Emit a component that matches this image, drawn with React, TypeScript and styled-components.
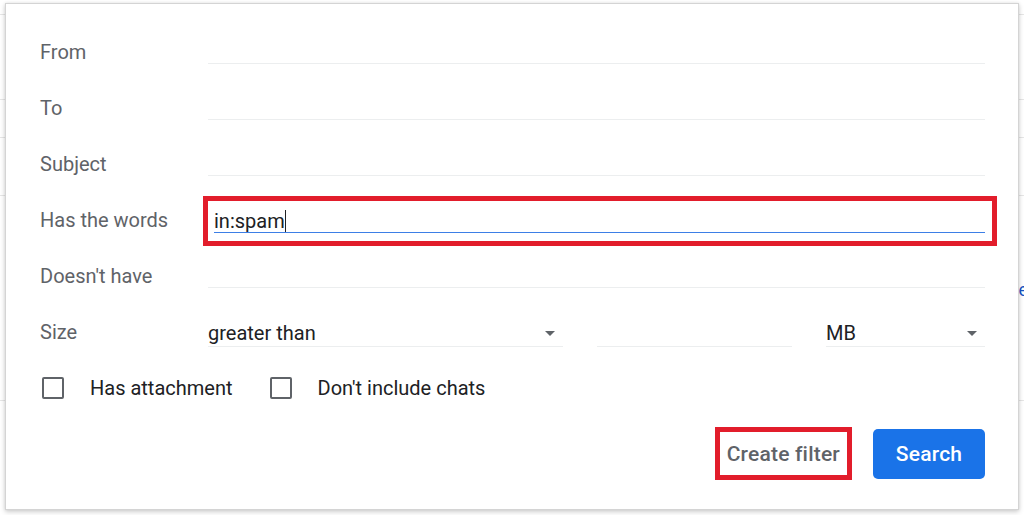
import styled, { createGlobalStyle } from 'styled-components';

const GlobalStyle = createGlobalStyle`
  html, body {
    margin: 0;
    padding: 0;
    background: #fff;
    overflow: hidden;
  }
  body {
    font-family: Roboto, "Liberation Sans", Arial, sans-serif;
  }
`;

const Page = styled.div`
  position: relative;
  width: 1024px;
  height: 515px;
  background: #fff;
  overflow: hidden;
`;

const Backdrop = styled.div`
  display: flex;
  flex-direction: column;
  height: 100%;
`;

const BackdropLine = styled.div<{ $top: number }>`
  margin-top: ${(p) => p.$top}px;
  height: 1px;
  background: #e6e6e6;
`;

const BackdropLink = styled.div`
  display: flex;
  justify-content: flex-end;
  margin-top: 84px;
  font-size: 18px;
  color: #1a56c4;
  line-height: 20px;
  margin-right: -4px;
`;

const Dialog = styled.div`
  position: absolute;
  left: 5px;
  top: 3px;
  width: 1014px;
  height: 507px;
  background: #fff;
  border: 1px solid #d4d4d4;
  box-shadow: 0 2px 5px rgba(0, 0, 0, 0.18), 0 0 3px rgba(0, 0, 0, 0.08);
  padding: 20px 33px 0 34px;
  box-sizing: border-box;
  display: flex;
  flex-direction: column;
`;

const Row = styled.div`
  display: grid;
  grid-template-columns: 168px 1fr;
  align-items: center;
  height: 56px;
`;

const Label = styled.div`
  font-size: 20px;
  color: #5f6368;
`;

const Field = styled.div<{ $focused?: boolean }>`
  height: 24px;
  box-sizing: border-box;
  border-bottom: 1px solid ${(p) => (p.$focused ? '#3d7fe6' : '#eceeef')};
  font-size: 20px;
  color: #202124;
  display: flex;
  align-items: center;
  margin-left: ${(p) => (p.$focused ? '6px' : '0')};
`;

const Highlight = styled.div`
  border: 5px solid #e21d2b;
`;

const WordsBox = styled(Highlight)`
  margin: 2px -12px 0 -5px;
  height: 50px;
  box-sizing: border-box;
  display: flex;
  align-items: center;
`;

const WordsField = styled(Field)`
  flex: 1;
  margin-right: 7px;
`;

const Caret = styled.span`
  display: inline-block;
  width: 1.5px;
  height: 22px;
  background: #202124;
`;

const SizeGrid = styled.div`
  display: grid;
  grid-template-columns: 355px 195px 1fr;
  column-gap: 34px;
  align-items: center;
`;

const Select = styled(Field)`
  justify-content: space-between;
  height: 28px;
  margin-top: 2px;
`;

const Arrow = styled.span`
  width: 0;
  height: 0;
  border-left: 5px solid transparent;
  border-right: 5px solid transparent;
  border-top: 5px solid #5f6368;
  margin-right: 8px;
  margin-top: 2px;
`;

const CheckRow = styled.div`
  display: flex;
  align-items: center;
  height: 56px;
  padding-left: 2px;
`;

const CheckItem = styled.label`
  display: flex;
  align-items: center;
  gap: 26px;
  font-size: 20px;
  color: #202124;
  margin-right: 37px;
`;

const Box = styled.span`
  width: 22px;
  height: 22px;
  box-sizing: border-box;
  border: 2px solid #5f6368;
  border-radius: 2px;
`;

const Actions = styled.div`
  display: flex;
  justify-content: flex-end;
  align-items: center;
  gap: 21px;
  margin-top: 12px;
`;

const FilterBox = styled(Highlight)`
  display: flex;
  align-items: center;
  height: 53px;
  box-sizing: border-box;
  margin-top: -1px;
`;

const TextButton = styled.button`
  border: none;
  background: transparent;
  font-family: Roboto, "Liberation Sans", Arial, sans-serif;
  font-size: 21px;
  font-weight: 500;
  color: #5f6368;
  padding: 0 7px;
  height: 43px;
  letter-spacing: 0.2px;
`;

const PrimaryButton = styled.button`
  border: none;
  background: #1a73e8;
  color: #fff;
  font-family: Roboto, "Liberation Sans", Arial, sans-serif;
  font-size: 21px;
  font-weight: 500;
  width: 112px;
  height: 50px;
  border-radius: 5px;
  letter-spacing: 0.2px;
`;

const fields = ['From', 'To', 'Subject'];

export default function App() {
  return (
    <Page>
      <GlobalStyle />
      <Backdrop>
        <BackdropLine $top={14} />
        <BackdropLine $top={84} />
        <BackdropLine $top={37} />
        <BackdropLine $top={57} />
        <BackdropLink>e</BackdropLink>
        <BackdropLine $top={100} />
      </Backdrop>
      <Dialog>
        {fields.map((f) => (
          <Row key={f}>
            <Label>{f}</Label>
            <Field />
          </Row>
        ))}
        <Row>
          <Label>Has the words</Label>
          <WordsBox>
            <WordsField $focused>
              in:spam
              <Caret />
            </WordsField>
          </WordsBox>
        </Row>
        <Row>
          <Label>Doesn't have</Label>
          <Field />
        </Row>
        <Row>
          <Label>Size</Label>
          <SizeGrid>
            <Select>
              greater than
              <Arrow />
            </Select>
            <Select />
            <Select>
              MB
              <Arrow />
            </Select>
          </SizeGrid>
        </Row>
        <CheckRow>
          <CheckItem>
            <Box />
            Has attachment
          </CheckItem>
          <CheckItem>
            <Box />
            Don't include chats
          </CheckItem>
        </CheckRow>
        <Actions>
          <FilterBox>
            <TextButton>Create filter</TextButton>
          </FilterBox>
          <PrimaryButton>Search</PrimaryButton>
        </Actions>
      </Dialog>
    </Page>
  );
}
